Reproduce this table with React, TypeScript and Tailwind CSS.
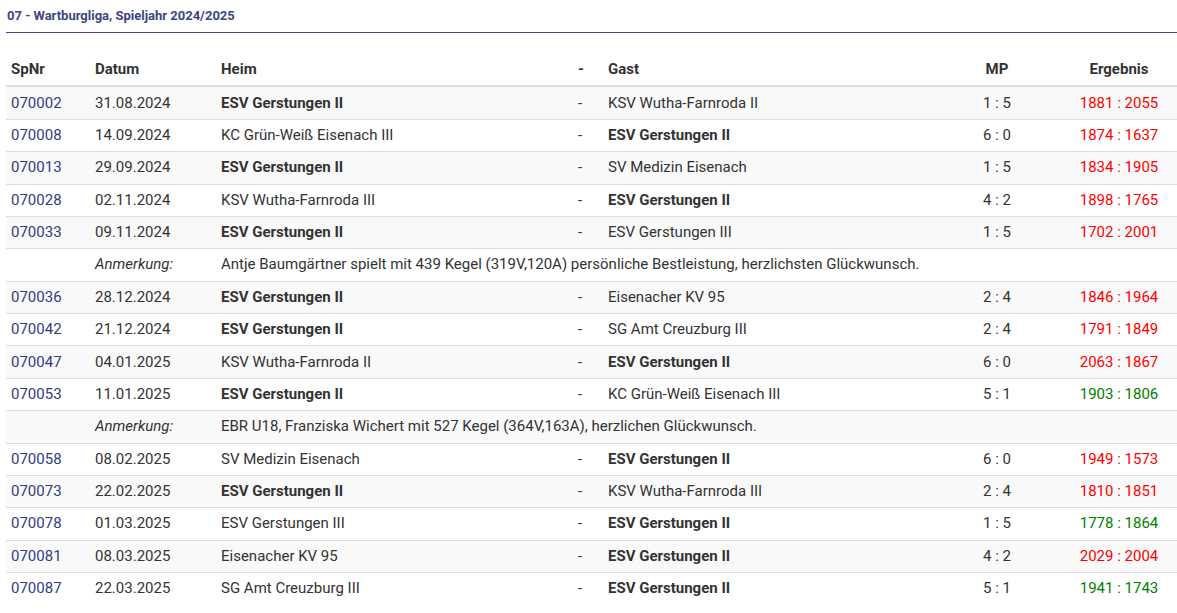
import React from 'react';

interface Game {
    nr: string;
    date: string;
    home: string;
    guest: string;
    mp: string;
    result: string;
    win: boolean;
    note?: string;
}

const TEAM = 'ESV Gerstungen II';

const games: Game[] = [
    { nr: '070002', date: '31.08.2024', home: 'ESV Gerstungen II', guest: 'KSV Wutha-Farnroda II', mp: '1 : 5', result: '1881 : 2055', win: false },
    { nr: '070008', date: '14.09.2024', home: 'KC Grün-Weiß Eisenach III', guest: 'ESV Gerstungen II', mp: '6 : 0', result: '1874 : 1637', win: false },
    { nr: '070013', date: '29.09.2024', home: 'ESV Gerstungen II', guest: 'SV Medizin Eisenach', mp: '1 : 5', result: '1834 : 1905', win: false },
    { nr: '070028', date: '02.11.2024', home: 'KSV Wutha-Farnroda III', guest: 'ESV Gerstungen II', mp: '4 : 2', result: '1898 : 1765', win: false },
    {
        nr: '070033', date: '09.11.2024', home: 'ESV Gerstungen II', guest: 'ESV Gerstungen III', mp: '1 : 5', result: '1702 : 2001', win: false,
        note: 'Antje Baumgärtner spielt mit 439 Kegel (319V,120A) persönliche Bestleistung, herzlichsten Glückwunsch.',
    },
    { nr: '070036', date: '28.12.2024', home: 'ESV Gerstungen II', guest: 'Eisenacher KV 95', mp: '2 : 4', result: '1846 : 1964', win: false },
    { nr: '070042', date: '21.12.2024', home: 'ESV Gerstungen II', guest: 'SG Amt Creuzburg III', mp: '2 : 4', result: '1791 : 1849', win: false },
    { nr: '070047', date: '04.01.2025', home: 'KSV Wutha-Farnroda II', guest: 'ESV Gerstungen II', mp: '6 : 0', result: '2063 : 1867', win: false },
    {
        nr: '070053', date: '11.01.2025', home: 'ESV Gerstungen II', guest: 'KC Grün-Weiß Eisenach III', mp: '5 : 1', result: '1903 : 1806', win: true,
        note: 'EBR U18, Franziska Wichert mit 527 Kegel (364V,163A), herzlichen Glückwunsch.',
    },
    { nr: '070058', date: '08.02.2025', home: 'SV Medizin Eisenach', guest: 'ESV Gerstungen II', mp: '6 : 0', result: '1949 : 1573', win: false },
    { nr: '070073', date: '22.02.2025', home: 'ESV Gerstungen II', guest: 'KSV Wutha-Farnroda III', mp: '2 : 4', result: '1810 : 1851', win: false },
    { nr: '070078', date: '01.03.2025', home: 'ESV Gerstungen III', guest: 'ESV Gerstungen II', mp: '1 : 5', result: '1778 : 1864', win: true },
    { nr: '070081', date: '08.03.2025', home: 'Eisenacher KV 95', guest: 'ESV Gerstungen II', mp: '4 : 2', result: '2029 : 2004', win: false },
    { nr: '070087', date: '22.03.2025', home: 'SG Amt Creuzburg III', guest: 'ESV Gerstungen II', mp: '5 : 1', result: '1941 : 1743', win: true },
];

const cell = 'px-[5px] py-[5.2px] leading-[21px]';

const App = () => {
    let stripe = 0;
    const rows: React.ReactNode[] = [];

    games.forEach((g) => {
        const bg = stripe++ % 2 === 0 ? 'bg-[#f9f9f9]' : 'bg-white';
        rows.push(
            <tr key={g.nr} className={`${bg} border-t border-[#dddddd] first:border-t-0`}>
                <td className={cell}>
                    <a href="#" className="text-[#2f3d82]">{g.nr}</a>
                </td>
                <td className={cell}>{g.date}</td>
                <td className={`${cell} ${g.home === TEAM ? 'font-bold' : ''}`}>{g.home}</td>
                <td className={cell}>-</td>
                <td className={`${cell} ${g.guest === TEAM ? 'font-bold' : ''}`}>{g.guest}</td>
                <td className={`${cell} text-center`}>{g.mp}</td>
                <td className={`${cell} text-center ${g.win ? 'text-[#008000]' : 'text-[#ff0000]'}`}>{g.result}</td>
            </tr>
        );
        if (g.note) {
            const nbg = stripe++ % 2 === 0 ? 'bg-[#f9f9f9]' : 'bg-white';
            rows.push(
                <tr key={g.nr + '-note'} className={`${nbg} border-t border-[#dddddd]`}>
                    <td className={cell} />
                    <td className={`${cell} italic`}>Anmerkung:</td>
                    <td className={cell} colSpan={5}>{g.note}</td>
                </tr>
            );
        }
    });

    return (
        <div className="bg-white min-h-screen pl-[6px] text-[15px] text-[#333333]" style={{ fontFamily: 'Roboto, "Liberation Sans", sans-serif' }}>
            <div className="pt-[6px] pb-[7px] pl-px text-[13px] font-bold leading-[19px] text-[#3d4584] border-b border-[#3e4a8c]">
                07 - Wartburgliga, Spieljahr 2024/2025
            </div>
            <table className="mt-[21px] w-full table-fixed border-collapse">
                <colgroup>
                    <col className="w-[84px]" />
                    <col className="w-[126px]" />
                    <col className="w-[357px]" />
                    <col className="w-[30px]" />
                    <col className="w-[330px]" />
                    <col className="w-[128px]" />
                    <col className="w-[116px]" />
                </colgroup>
                <thead>
                    <tr className="border-b-2 border-[#dddddd] text-left font-bold">
                        <th className={cell}>SpNr</th>
                        <th className={cell}>Datum</th>
                        <th className={cell}>Heim</th>
                        <th className={cell}>-</th>
                        <th className={cell}>Gast</th>
                        <th className={`${cell} text-center`}>MP</th>
                        <th className={`${cell} text-center`}>Ergebnis</th>
                    </tr>
                </thead>
                <tbody>{rows}</tbody>
            </table>
        </div>
    );
};

export default App;
